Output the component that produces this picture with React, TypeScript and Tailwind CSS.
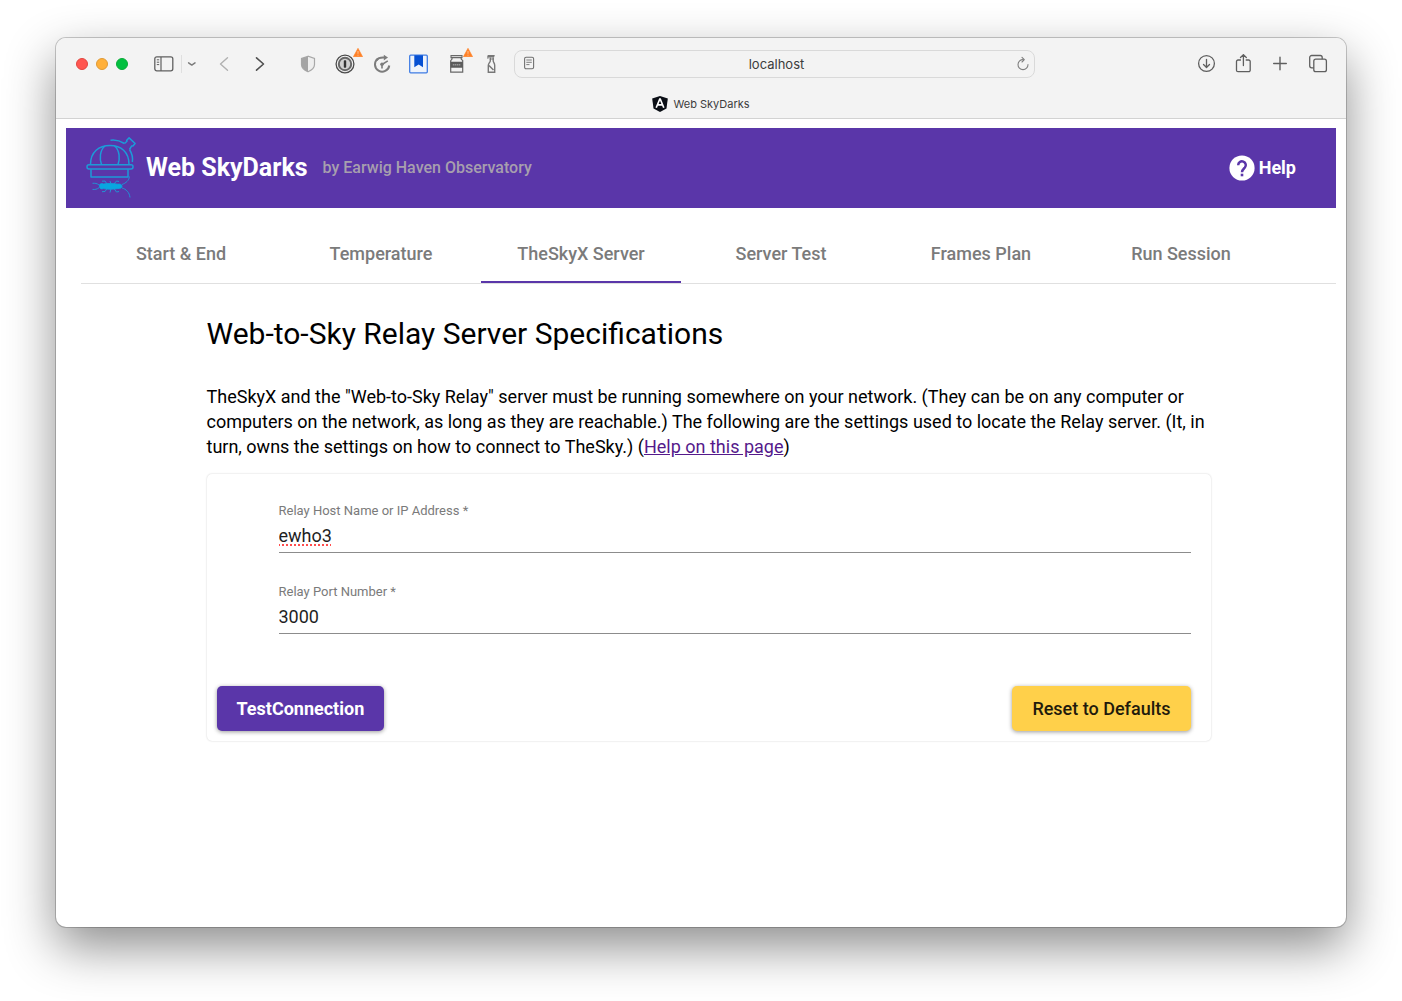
import React, { useState } from "react";

const tabs = ["Start & End", "Temperature", "TheSkyX Server", "Server Test", "Frames Plan", "Run Session"];

type IconButtonProps = { label: string; className?: string; children: React.ReactNode };

function IconButton({ label, className = "", children }: IconButtonProps) {
  return (
    <button type="button" aria-label={label} className={`relative flex h-6 shrink-0 items-center justify-center ${className}`}>
      {children}
    </button>
  );
}

function Warning() {
  return (
    <svg viewBox="0 0 10 9" className="absolute -right-2 -top-1 h-[9px] w-[10px]">
      <path d="M5 .3 9.6 8.7H.4Z" fill="#ff8127" stroke="#ff8127" strokeWidth=".6" strokeLinejoin="round" />
      <path d="M5 3v2.8M5 6.7v1" stroke="#ffd0ae" strokeWidth=".8" />
    </svg>
  );
}

function LeftTools() {
  return (
    <div className="flex w-[458px] shrink-0 items-center pl-5">
      <div className="flex gap-2">
        <button type="button" aria-label="Close" className="size-3 rounded-full border border-[#e2463f] bg-[#ff5650]" />
        <button type="button" aria-label="Minimize" className="size-3 rounded-full border border-[#e09a35] bg-[#ffb03a]" />
        <button type="button" aria-label="Zoom" className="size-3 rounded-full border border-[#0aab38] bg-[#02c040]" />
      </div>
      <IconButton label="Sidebar" className="ml-[26px] w-5">
        <svg viewBox="0 0 20 16" className="h-4 w-5" fill="none" stroke="#606060">
          <rect x=".8" y=".8" width="18" height="14" rx="2" strokeWidth="1.3" />
          <path d="M7 1v14" strokeWidth="1.2" />
          <path d="M2.8 3.8h2.4M2.8 6.2h2.4M2.8 8.6h2.4" strokeWidth="1" />
        </svg>
      </IconButton>
      <span className="ml-[7px] h-[18px] w-px bg-[#dfdfdf]" />
      <IconButton label="Sidebar menu" className="ml-1 w-3">
        <svg viewBox="0 0 12 8" className="h-2 w-3" fill="none" stroke="#7c7c7c" strokeWidth="1.5" strokeLinecap="round" strokeLinejoin="round">
          <path d="m2.6 2.900 3.200 2.200 3.200-2.200" />
        </svg>
      </IconButton>
      <IconButton label="Back" className="ml-5 w-3">
        <svg viewBox="0 0 12 16" className="h-4 w-3" fill="none" stroke="#b0b0b0" strokeWidth="1.4" strokeLinecap="round" strokeLinejoin="round">
          <path d="M9.500 1.800 2.500 8l7 6.200" />
        </svg>
      </IconButton>
      <IconButton label="Forward" className="ml-6 w-3">
        <svg viewBox="0 0 12 16" className="h-4 w-3" fill="none" stroke="#505050" strokeWidth="1.600" strokeLinecap="round" strokeLinejoin="round">
          <path d="m2.500 1.800 7 6.200-7 6.200" />
        </svg>
      </IconButton>
      <IconButton label="Privacy report" className="ml-[34px] w-4">
        <svg viewBox="0 0 16 18" className="h-[18px] w-4">
          <path d="M8 1.200 1.500 3.400v6c0 3.300 3 5.800 6.500 7.400 3.500-1.600 6.500-4.100 6.500-7.400v-6Z" fill="#eee" stroke="#a8a8a8" strokeWidth="1.200" />
          <path d="M8 1.200 1.500 3.400v6c0 3.300 3 5.800 6.500 7.400Z" fill="#a4a4a4" />
        </svg>
      </IconButton>
      <IconButton label="Passwords" className="ml-[19px] w-5">
        <svg viewBox="0 0 20 20" className="size-5" fill="none">
          <circle cx="10" cy="10" r="8.900" stroke="#4c4c4c" strokeWidth="1.300" />
          <circle cx="10" cy="10" r="6.200" fill="#d0d0d0" stroke="#686868" strokeWidth="2" />
          <rect x="8.800" y="6.300" width="2.400" height="7.400" rx=".8" fill="#333" />
        </svg>
        <Warning />
      </IconButton>
      <IconButton label="Privacy timer" className="ml-[17px] w-5">
        <svg viewBox="0 0 20 20" className="size-5" fill="none" stroke="#7c7c7c" strokeWidth="2">
          <path d="M5.800 4.700a7.200 7.200 0 1 0 11.500 6.800" />
          <path d="M4.300 6.300C6.200 3.800 9.200 3.200 12.500 3.500" />
          <path d="m11.800.8 4.200 2.700-4.200 3Z" fill="#7c7c7c" stroke="none" />
          <path d="M10 14.500v-4L15.800 6.800" strokeWidth="1.600" />
          <circle cx="10" cy="10.300" r="1.800" fill="#7c7c7c" stroke="none" />
        </svg>
      </IconButton>
      <IconButton label="Bookmark" className="ml-4 w-5">
        <svg viewBox="0 0 20 20" className="size-5" fill="none">
          <rect x="1.700" y="1.200" width="17.600" height="17.600" rx="1" fill="#eef3fb" stroke="#3f7ce4" strokeWidth="1.300" />
          <path d="M6.300 1.200h8.700v12l-4.350-2.700-4.350 2.700Z" fill="#0650d3" />
        </svg>
      </IconButton>
      <IconButton label="Cookie jar" className="ml-[21px] w-4">
        <svg viewBox="0 0 16 20" className="h-5 w-4" fill="none" stroke="#686868">
          <path d="M2 1.600h11v2H2Z" strokeWidth="1.100" />
          <path d="M3 3.800v1.300L1.700 6.600v11.600h12V6.600l-1.500-1.500V3.800" strokeWidth="1.200" />
          <path d="M1.500 7.700h12.400v6H1.500Z" fill="#5c5c5c" stroke="none" />
          <path d="M3.800 10.700h7.800" stroke="#999" strokeWidth="1.600" strokeDasharray="1.500 .5" />
        </svg>
        <Warning />
      </IconButton>
      <IconButton label="Cleaner" className="ml-[18px] w-4">
        <svg viewBox="0 0 16 20" className="h-5 w-4" fill="none" stroke="#777">
          <path d="M4.500.900h7.300l-.8 2.600H5.200Z" fill="#777" stroke="none" />
          <path d="M4.900 2v2.800M6.800 5h4" strokeWidth="1.100" />
          <path d="M7.300 3.500v3.200c0 1.800-2 2.300-2 4.800v6.800h6.400v-6.800c0-2.500-1.500-3-1.500-4.800V3.500" strokeWidth="1.400" />
          <path d="m6 11.500 4.500 4.500" strokeWidth="1.500" />
        </svg>
      </IconButton>
    </div>
  );
}

function RightTools() {
  return (
    <div className="flex w-[311px] shrink-0 items-center justify-end gap-[17px] pr-[18px]">
      <IconButton label="Downloads" className="w-5">
        <svg viewBox="0 0 20 20" className="size-5" fill="none" stroke="#5f5f5f" strokeWidth="1.300" strokeLinecap="round" strokeLinejoin="round">
          <circle cx="9.500" cy="9.500" r="7.900" />
          <path d="M9.500 5.300v8M6.500 10.500l3 3 3-3" />
        </svg>
      </IconButton>
      <IconButton label="Share" className="w-5">
        <svg viewBox="0 0 20 20" className="size-5" fill="none" stroke="#5f5f5f" strokeWidth="1.300" strokeLinecap="round" strokeLinejoin="round">
          <path d="M6.500 6H4A1.500 1.500 0 0 0 2.500 7.500v8.700A1.500 1.500 0 0 0 4 17.700h10.700a1.500 1.500 0 0 0 1.500-1.500V7.500A1.500 1.500 0 0 0 14.700 6h-2.500" />
          <path d="M9.400 11.500V.8M6.500 3.500 9.400.6l2.900 2.900" />
        </svg>
      </IconButton>
      <IconButton label="New tab" className="w-5">
        <svg viewBox="0 0 20 20" className="size-5" fill="none" stroke="#5f5f5f" strokeWidth="1.400" strokeLinecap="round">
          <path d="M2.700 9.500h12.600M9 3.200v12.600" />
        </svg>
      </IconButton>
      <IconButton label="Tab overview" className="w-5">
        <svg viewBox="0 0 20 20" className="size-5" fill="none" stroke="#5f5f5f" strokeWidth="1.300" strokeLinejoin="round">
          <rect x="5.800" y="5.200" width="12.600" height="12.500" rx="2" />
          <path d="M5.800 13.800H3.700a2 2 0 0 1-2-2V3.500a2 2 0 0 1 2-2h8.500a2 2 0 0 1 2 2v1.700" />
        </svg>
      </IconButton>
    </div>
  );
}

function BrowserBar() {
  return (
    <div className="border-b border-[#d2d2d2] bg-[#f3f3f3] font-[Inter,sans-serif]">
      <div className="flex h-[52px] items-center">
        <LeftTools />
        <div className="flex h-7 min-w-0 flex-1 items-center rounded-lg border border-[#d9d9d9] px-1">
          <IconButton label="Reader" className="w-5">
            <svg viewBox="0 0 20 20" className="size-5" fill="none" stroke="#707070">
              <rect x="5.600" y="3.200" width="9" height="11.500" rx="1.500" strokeWidth="1.100" />
              <path d="M7.300 6h5.500M7.300 8.300h5.500M7.300 10.600h3.200" strokeWidth=".9" />
            </svg>
          </IconButton>
          <input
            aria-label="Address"
            defaultValue="localhost"
            className="min-w-0 flex-1 bg-transparent pt-0.5 text-center text-[13px] text-[#3c3c3c] outline-none"
          />
          <IconButton label="Reload" className="w-4">
            <svg viewBox="0 0 16 16" className="size-4" fill="none" stroke="#808080" strokeWidth="1.100" strokeLinecap="round" strokeLinejoin="round">
              <path d="M9.300 3.600A5 5 0 1 0 14 8.500" />
              <path d="M8 1.400 10.300 3.700 8 6" />
            </svg>
          </IconButton>
        </div>
        <RightTools />
      </div>
      <div className="flex h-7 items-center justify-center gap-[5px] text-[11px] text-[#3c3c3c]">
        <svg viewBox="0 0 16 16" className="size-4">
          <path d="M8 0 15.800 2.600 14.500 12.600 8 16 1.500 12.600.2 2.600Z" fill="#0b0f16" />
          <path d="M8 2.500 4.200 11.700M8 2.500l3.800 9.200M5.800 8.900h4.400" stroke="#fff" strokeWidth="1.700" fill="none" />
        </svg>
        <span>Web SkyDarks</span>
      </div>
    </div>
  );
}

function Logo() {
  return (
    <svg viewBox="0 0 50 62" className="h-[62px] w-[50px]" fill="none" stroke="#1c9bd8" strokeWidth="1.500" strokeLinejoin="round">
      <path d="M24.500 3.200c5.500-.8 9.500.5 14 3.300M46.300 25c.8-4.500-.3-8.500-2.800-12.500" />
      <path d="M38.500 6.500 41 4.300l-.3-1.100 2.400-2.300 6 5.600-2.200 2.600-1.200-.2-2.200 3.600" />
      <path d="M4.500 27.500C4.500 15 13 8.500 24 8.500S43 15 43 27.500" />
      <path d="M19 9c-5.500 4.500-5.500 13-3.500 18.500M28.500 9c5.500 4.500 5.500 13 3.500 18.500" />
      <rect x="1" y="27.700" width="46" height="4.400" rx="2" />
      <path d="M5 32.200v7.800h37v-7.800" />
      <path d="M13.500 49.500c-.5-2.500 1.500-3.500 4-2.500 4-.8 10-.6 14.500.2 2-.5 4 .5 4 2.100s-2 2.600-4 2.200c-4.500.8-10.500 1-14.500.1-2.500.9-4-.2-4-2.100Z" fill="#08a6e0" stroke="#08a6e0" strokeWidth=".8" />
      <path d="M13 48c-2-1.700-4-1.900-6.500-1.700M13 50.700c-2 1.700-4 1.900-6.500 1.700M36 47.500c4-1.500 7-4 7.500-8M36 51c4 1 7.500 4.500 8 9.500" strokeWidth=".9" />
      <path d="m21 47-2-3-3 .2M25 47l-1-3M28 47l2.500-3 2.500.5M21 51.500l-2 3-3 .2M25 51.500l-1 4M28 51.500l2.500 3.500 2.500-.5" strokeWidth=".9" />
    </svg>
  );
}

type FieldProps = { id: string; label: string; value: string; misspelled?: boolean };

function Field({ id, label, value, misspelled = false }: FieldProps) {
  return (
    <div className="flex flex-col border-b border-[#8c8c8c]">
      <label htmlFor={id} className="text-[13px] leading-4 text-[#7a7a7a]">
        {label} *
      </label>
      <input
        id={id}
        defaultValue={value}
        spellCheck={false}
        required
        className={`mt-1 h-[29px] w-full bg-transparent pb-1 text-lg text-[#1f1f1f] outline-none ${
          misspelled ? "underline decoration-[#ff4d4d] decoration-dotted decoration-2 underline-offset-2" : ""
        }`}
      />
    </div>
  );
}

export default function App() {
  const [active, setActive] = useState(2);
  return (
    <div className="flex min-h-screen flex-col bg-white px-14 pb-[74px] pt-[38px] font-[Roboto,sans-serif]">
      <div className="flex flex-1 flex-col overflow-hidden rounded-[10px] bg-white shadow-[0_0_0_1px_rgba(0,0,0,0.2),0_20px_50px_rgba(0,0,0,0.45)]">
        <BrowserBar />
        <div className="px-[10px] pt-[9px]">
          <header className="flex h-20 items-center bg-[#5a36a9] px-5">
            <Logo />
            <h1 className="ml-[10px] text-[25px] font-bold text-white">Web SkyDarks</h1>
            <p className="ml-[15px] text-base font-medium text-[#a79fae]">by Earwig Haven Observatory</p>
            <a href="#help" className="ml-auto mr-5 flex items-center gap-1 text-lg font-bold text-white">
              <svg viewBox="0 0 26 26" className="size-[26px]">
                <circle cx="13" cy="13" r="12.600" fill="#fff" />
                <path d="M9.200 10.200a3.800 3.800 0 1 1 6.600 2.500c-1.600 1.600-2.800 2.200-2.800 4.600" fill="none" stroke="#5a36a9" strokeWidth="2.500" />
                <rect x="11.700" y="18.700" width="2.600" height="2.600" fill="#5a36a9" />
              </svg>
              Help
            </a>
          </header>

          <div className="ml-[15px] mt-4">
            <nav className="flex border-b border-[#e0e0e0]">
              {tabs.map((tab, i) => (
                <button
                  key={tab}
                  type="button"
                  onClick={() => setActive(i)}
                  className={`h-[59px] w-[200px] border-b-2 pt-0.5 text-lg font-medium text-[#7b7b7b] ${
                    i === active ? "border-[#5a36a9]" : "border-transparent"
                  }`}
                >
                  {tab}
                </button>
              ))}
            </nav>

            <main className="px-[10%] pb-10">
              <h2 className="mt-[30px] text-[30px] leading-10 text-black">Web-to-Sky Relay Server Specifications</h2>
              <p className="mt-[30px] text-lg leading-[25px] text-black">
                TheSkyX and the "Web-to-Sky Relay" server must be running somewhere on your network. (They can be on any
                computer or computers on the network, as long as they are reachable.) The following are the settings
                used to locate the Relay server. (It, in turn, owns the settings on how to connect to TheSky.) (
                <a href="#page-help" className="text-[#551a8b] underline">
                  Help on this page
                </a>
                )
              </p>
              <form
                onSubmit={(e) => e.preventDefault()}
                className="mt-[15px] rounded-[5px] pb-[10px] pl-[10px] pr-5 pt-[29px] shadow-[0_0_2px_rgba(0,0,0,0.2)]"
              >
                <div className="ml-[62px] flex flex-col gap-[31px]">
                  <Field id="relay-host" label="Relay Host Name or IP Address" value="ewho3" misspelled />
                  <Field id="relay-port" label="Relay Port Number" value="3000" />
                </div>
                <div className="mt-[52px] flex justify-between">
                  <button
                    type="submit"
                    className="h-[45px] rounded-[5px] bg-[#5a36a9] px-5 text-lg font-bold text-white shadow-[0_1px_4px_rgba(0,0,0,0.4)]"
                  >
                    TestConnection
                  </button>
                  <button
                    type="reset"
                    className="h-[45px] rounded-[5px] bg-[#ffd04a] px-5 text-lg font-medium text-[#1f1b0c] shadow-[0_1px_4px_rgba(0,0,0,0.4)]"
                  >
                    Reset to Defaults
                  </button>
                </div>
              </form>
            </main>
          </div>
        </div>
      </div>
    </div>
  );
}
